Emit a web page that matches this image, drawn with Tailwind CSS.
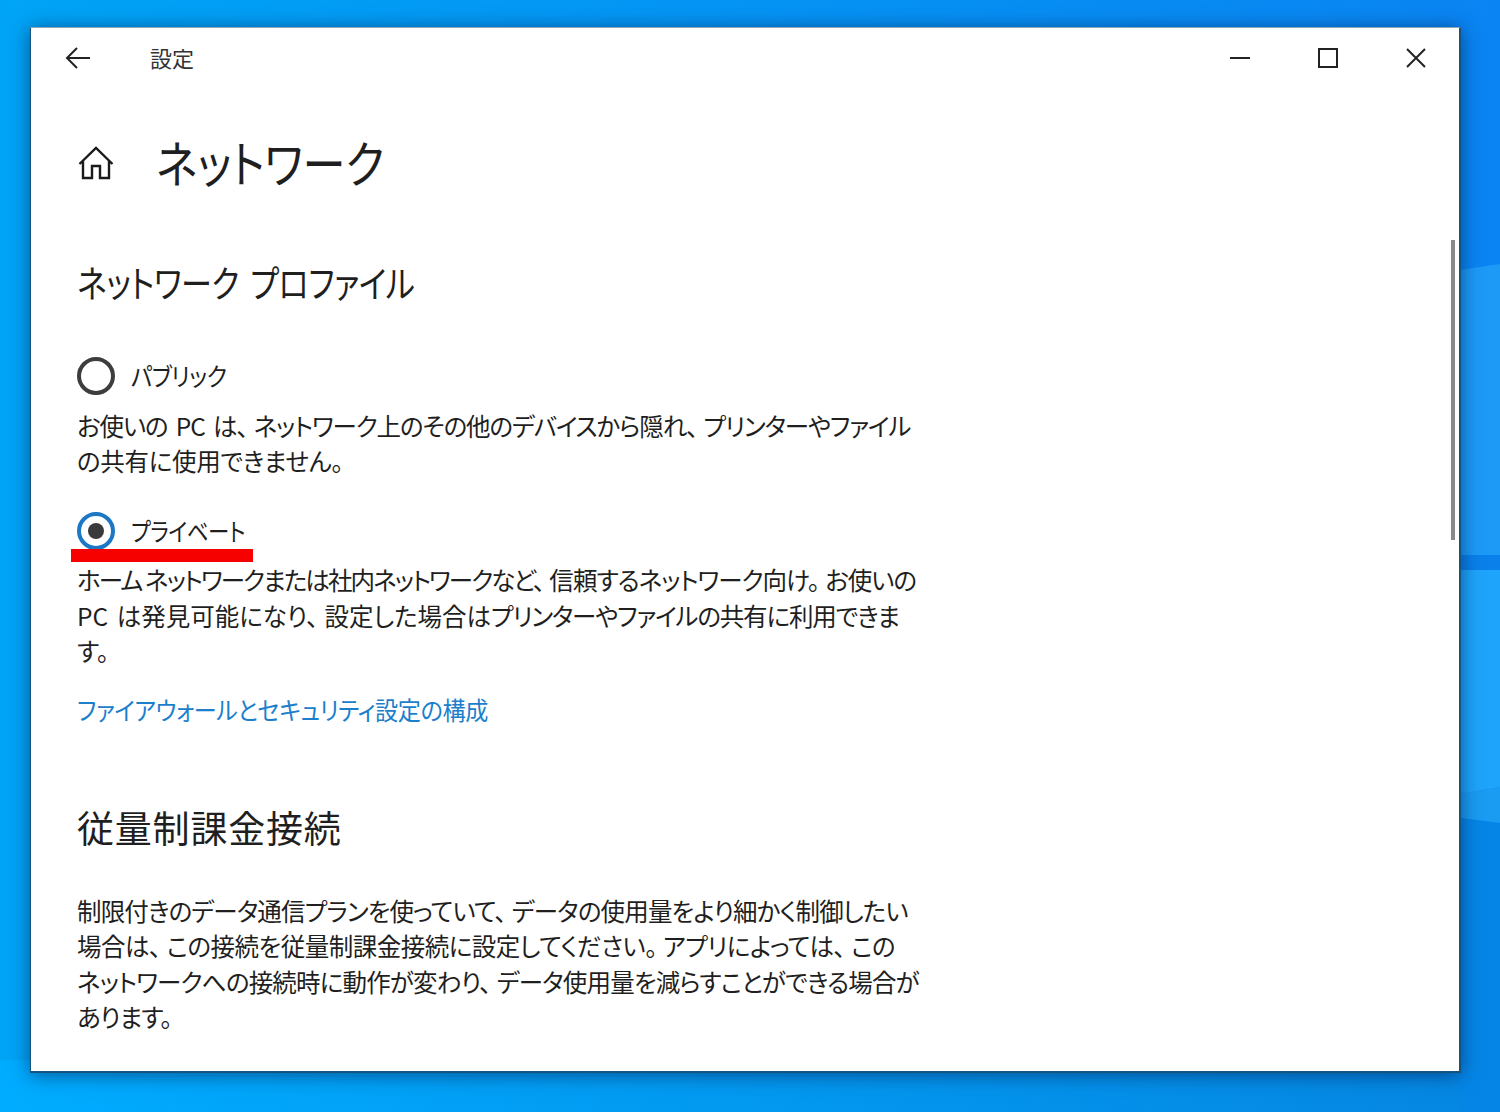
<!DOCTYPE html>
<html lang="ja">
<head>
    <meta charset="UTF-8">
    <title>設定</title>
    <script src="https://cdn.jsdelivr.net/npm/@tailwindcss/browser@4"></script>
</head>
<body class="w-[1500px] h-[1112px] overflow-hidden relative bg-[#0a8cf0] font-['Noto_Sans_CJK_JP','Noto_Sans',sans-serif] [font-feature-settings:'palt']">
    <!-- Wallpaper -->
    <svg class="absolute inset-0" width="1500" height="1112" viewBox="0 0 1500 1112">
        <defs>
            <linearGradient id="wall" x1="0" y1="0" x2="1" y2="0">
                <stop offset="0" stop-color="#00a4f6"/>
                <stop offset="0.5" stop-color="#0594f4"/>
                <stop offset="1" stop-color="#0a84f2"/>
            </linearGradient>
            <linearGradient id="foot" x1="0" y1="0" x2="1" y2="0">
                <stop offset="0" stop-color="#00acff"/>
                <stop offset="1" stop-color="#0586e2"/>
            </linearGradient>
        </defs>
        <rect width="1500" height="1112" fill="url(#wall)"/>
        <rect y="1060" width="1500" height="52" fill="url(#foot)"/>
        <polygon points="1460,270 1500,264 1500,555 1460,555" fill="#1c9af6"/>
        <rect x="1460" y="555" width="40" height="15" fill="#0a80ea"/>
        <polygon points="1460,570 1500,570 1500,787 1460,794" fill="#1ea4fa"/>
        <polygon points="1460,794 1500,787 1500,823 1460,818" fill="#1a9cf2"/>
        <polygon points="1460,818 1500,823 1500,1112 1460,1112" fill="#0586e6"/>
    </svg>

    <!-- Settings window -->
    <div class="absolute left-[30px] top-[27px] w-[1431px] h-[1046px] bg-white border-t border-l border-r-2 border-b-2 border-l-[#14557f] border-r-[#14557f] border-b-[#14557f] border-t-[#8fa6b5] shadow-[0_2px_18px_rgba(0,30,80,0.6)] text-[#1f1f1f] whitespace-nowrap">
        <!-- Title bar -->
        <div class="h-[60px] flex items-center">
            <svg class="ml-[34px]" width="26" height="24" viewBox="0 0 26 24" fill="none" stroke="#222" stroke-width="2">
                <path d="M25 12H2M12 2 2 12l10 10"/>
            </svg>
            <span class="ml-[59px] mb-[3px] text-[22px] leading-none text-[#333]">設定</span>
            <div class="ml-auto flex items-center gap-[68px] mr-[33px]">
                <svg width="20" height="20" viewBox="0 0 20 20" stroke="#222" stroke-width="2"><path d="M0 10h20"/></svg>
                <svg width="20" height="20" viewBox="0 0 20 20" fill="none" stroke="#222" stroke-width="2"><rect x="1" y="1" width="18" height="18"/></svg>
                <svg width="20" height="20" viewBox="0 0 20 20" stroke="#222" stroke-width="2"><path d="M1 1l18 18M19 1 1 19"/></svg>
            </div>
        </div>

        <!-- Scroll thumb -->
        <div class="absolute right-[4px] top-[212px] w-[4px] h-[300px] bg-[#8a8a8a]"></div>

        <div class="pl-[46px]">
            <!-- Page heading -->
            <div class="flex items-center h-[72px] mt-[38px]">
                <svg class="mt-[2px] ml-[1px]" width="36" height="34" viewBox="0 0 36 34" fill="none" stroke="#1a1a1a" stroke-width="2.4">
                    <path d="M1.5 18 18 2l16.500 16M5 15v17h9V20h8v12h9V15"/>
                </svg>
                <h1 class="ml-[42px] text-[50px] leading-none origin-left scale-x-[0.863] -translate-y-[1px]">ネットワーク</h1>
            </div>

            <h2 class="mt-[61px] text-[37px] leading-[46px] tracking-[-0.500px] [word-spacing:6px] origin-left scale-x-[0.840]">ネットワーク プロファイル</h2>

            <!-- Radio: public -->
            <div class="mt-[51px] flex items-center h-[40px]">
                <span class="w-[38px] h-[38px] rounded-full border-[4px] border-[#3d3d3d]"></span>
                <span class="ml-[16px] text-[25px] tracking-[-0.500px] origin-left scale-x-[0.905]">パブリック</span>
            </div>
            <p class="mt-[12px] text-[24.500px] leading-[35px]">
                <span class="block tracking-[-1.100px] [word-spacing:4px]">お使いの PC は<span class="pr-[6px]">、</span>ネットワーク上のその他のデバイスから隠れ<span class="pr-[6px]">、</span>プリンターやファイル</span>
                <span class="block tracking-[-0.300px]">の共有に使用できません。</span>
            </p>

            <!-- Radio: private -->
            <div class="relative mt-[33px] flex items-center h-[40px]">
                <span class="w-[38px] h-[38px] rounded-full border-[4px] border-[#1c78c4] flex items-center justify-center">
                    <span class="w-[16px] h-[16px] rounded-full bg-[#3a3a3a]"></span>
                </span>
                <span class="ml-[16px] text-[25px] tracking-[-0.500px] origin-left scale-x-[0.857]">プライベート</span>
                <div class="absolute left-[-6px] top-[38px] w-[182px] h-[13px] bg-[#f70000]"></div>
            </div>
            <p class="mt-[11px] text-[24.500px] leading-[35.500px]">
                <span class="block"><span class="tracking-[-1.900px]">ホーム ネットワークまたは社内ネットワークなど<span class="pr-[6px]">、</span></span><span class="tracking-[-0.950px]">信頼するネットワーク向け<span class="pr-[6px]">。</span>お使いの</span></span>
                <span class="block [word-spacing:3px]"><span class="tracking-[0px]">PC は発見可能になり<span class="pr-[6px]">、</span>設定した場合は</span><span class="tracking-[-1.150px]">プリンターやファイルの共有に利用できま</span></span>
                <span class="block">す。</span>
            </p>

            <a href="#" class="block mt-[22px] text-[25px] leading-[36px] tracking-[-0.400px] text-[#1b7fcc] origin-left scale-x-[0.926]">ファイアウォールとセキュリティ設定の構成</a>

            <h2 class="mt-[77px] text-[37px] leading-[46px] tracking-[0.800px]">従量制課金接続</h2>

            <p class="mt-[43px] text-[24.500px] leading-[35.600px]">
                <span class="block tracking-[-0.830px]">制限付きのデータ通信プランを使っていて<span class="pr-[6px]">、</span>データの使用量をより細かく制御したい</span>
                <span class="block tracking-[-0.500px]">場合は<span class="pr-[6px]">、</span>この接続を従量制課金接続に設定してください<span class="pr-[6px]">。</span>アプリによっては<span class="pr-[6px]">、</span>この</span>
                <span class="block tracking-[-0.800px]">ネットワークへの接続時に動作が変わり<span class="pr-[6px]">、</span>データ使用量を減らすことができる場合が</span>
                <span class="block tracking-[-0.800px]">あります。</span>
            </p>
        </div>
    </div>
</body>
</html>
